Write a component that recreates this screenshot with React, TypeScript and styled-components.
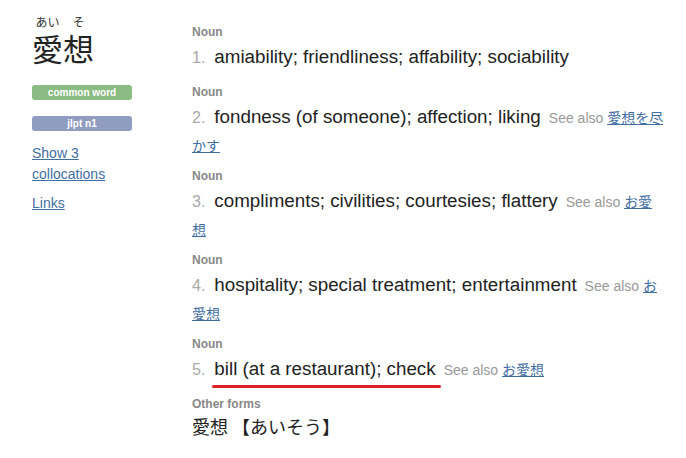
import React from 'react';
import styled, { createGlobalStyle } from 'styled-components';

const GlobalStyle = createGlobalStyle`
  html, body {
    margin: 0;
    padding: 0;
    background: #fff;
  }
  body {
    font-family: "Liberation Sans", Arial, "Noto Sans CJK JP", sans-serif;
    color: #222;
  }
`;

interface ISense {
  definition: string;
  seeAlso?: string;
  marked?: boolean;
}

const senses: ISense[] = [
  { definition: 'amiability; friendliness; affability; sociability' },
  { definition: 'fondness (of someone); affection; liking', seeAlso: '愛想を尽かす' },
  { definition: 'compliments; civilities; courtesies; flattery', seeAlso: 'お愛想' },
  { definition: 'hospitality; special treatment; entertainment', seeAlso: 'お愛想' },
  { definition: 'bill (at a restaurant); check', seeAlso: 'お愛想', marked: true },
];

const App = () => {
  return (
    <>
      <GlobalStyle />
      <Page>
        <Sidebar>
          <Word>
            <Ruby>
              <Furigana>あい</Furigana>
              <Kanji>愛</Kanji>
            </Ruby>
            <Ruby>
              <Furigana>そ</Furigana>
              <Kanji>想</Kanji>
            </Ruby>
          </Word>
          <Badge color="#8abc83">common word</Badge>
          <Badge color="#909dc0">jlpt n1</Badge>
          <SideLinks>
            <Link href="#">Show 3 collocations</Link>
            <Link href="#">Links</Link>
          </SideLinks>
        </Sidebar>
        <Meanings>
          {senses.map((sense, i) => (
            <Sense key={i}>
              <Tag>Noun</Tag>
              <MeaningLine>
                <Divider>{i + 1}.</Divider>
                <Definition>
                  {sense.marked ? <Marked>{sense.definition}</Marked> : sense.definition}
                </Definition>
                {sense.seeAlso && (
                  <SeeAlso>
                    See also <Link href="#">{sense.seeAlso}</Link>
                  </SeeAlso>
                )}
              </MeaningLine>
            </Sense>
          ))}
          <Tag>Other forms</Tag>
          <OtherForm>愛想 【あいそう】</OtherForm>
        </Meanings>
      </Page>
    </>
  );
};

export default App;

const Page = styled.div`
  display: flex;
  gap: 60px;
  padding: 14px 0 0 32px;
`;

const Sidebar = styled.div`
  width: 100px;
  flex-shrink: 0;
`;

const Word = styled.div`
  display: flex;
  align-items: flex-end;
  font-family: "Noto Sans CJK JP", sans-serif;
  margin-bottom: 19px;
`;

const Ruby = styled.div`
  display: flex;
  flex-direction: column;
  align-items: center;
`;

const Furigana = styled.span`
  font-size: 12px;
  line-height: 16px;
  color: #333;
`;

const Kanji = styled.span`
  font-size: 31px;
  line-height: 36px;
  color: #222;
`;

const Badge = styled.div<{ color: string }>`
  height: 15px;
  line-height: 15px;
  border-radius: 3px;
  background: ${(p) => p.color};
  color: #fff;
  font-size: 10px;
  font-weight: bold;
  text-align: center;
  margin-bottom: 16px;
`;

const SideLinks = styled.div`
  display: flex;
  flex-direction: column;
  gap: 8px;
  margin-top: -4px;
  font-size: 14px;
  line-height: 21px;
`;

const Link = styled.a`
  color: #3f6ea3;
  text-decoration: underline;
  font-family: "Liberation Sans", Arial, "Noto Sans CJK JP", sans-serif;
`;

const Meanings = styled.div`
  width: 473px;
  padding-top: 11px;
`;

const Sense = styled.div`
  margin-bottom: 11px;
`;

const Tag = styled.div`
  font-size: 12px;
  line-height: 14px;
  font-weight: bold;
  color: #888;
`;

const MeaningLine = styled.div`
  font-size: 14px;
  line-height: 24px;
  word-break: break-all;
`;

const Divider = styled.span`
  font-size: 16px;
  color: #aaa;
  margin-right: 9px;
`;

const Definition = styled.span`
  font-size: 18.8px;
  line-height: 35px;
  color: #222;
  margin-right: 8px;
  word-break: normal;
`;

const Marked = styled.span`
  position: relative;
  &::after {
    content: '';
    position: absolute;
    left: -2px;
    right: -5px;
    bottom: -9px;
    height: 3px;
    border-radius: 2px;
    background: #dc2127;
  }
`;

const SeeAlso = styled.span`
  color: #999;
`;

const OtherForm = styled.div`
  font-family: "Noto Sans CJK JP", sans-serif;
  font-size: 18px;
  line-height: 28px;
  margin-top: 1px;
  color: #222;
`;
